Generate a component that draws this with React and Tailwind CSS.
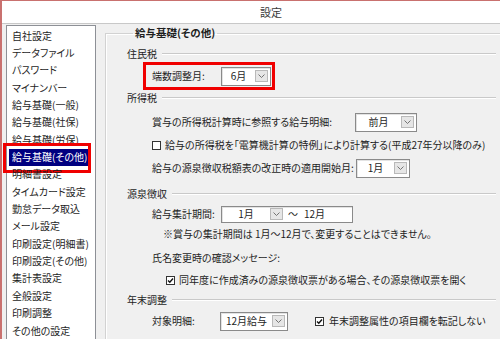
import React from "react";

const menu = [
  "自社設定",
  "データファイル",
  "パスワード",
  "マイナンバー",
  "給与基礎(一般)",
  "給与基礎(社保)",
  "給与基礎(労保)",
  "給与基礎(その他)",
  "明細書設定",
  "タイムカード設定",
  "勤怠データ取込",
  "メール設定",
  "印刷設定(明細書)",
  "印刷設定(その他)",
  "集計表設定",
  "全般設定",
  "印刷調整",
  "その他の設定",
];

const DropBtn = () => (
  <span className="flex h-[12px] w-[13px] shrink-0 items-center justify-center border border-[#b9b9b9] bg-[#e6e6e6]">
    <svg width="7" height="4" viewBox="0 0 7 4">
      <path d="M0.5 0.5 L3.5 3.5 L6.5 0.5" fill="none" stroke="#666" strokeWidth="0.9" />
    </svg>
  </span>
);

const Select = ({ value, w }) => (
  <div
    className="flex h-[19px] shrink-0 items-center border border-[#8a8a8a] bg-white pr-[2px] shadow-[inset_1px_1px_0_#e3e3e3]"
    style={{ width: w }}
  >
    <span className="flex-1 text-center">{value}</span>
    <DropBtn />
  </div>
);

const CheckBox = ({ checked }) => (
  <span className="flex h-[9px] w-[9px] shrink-0 items-center justify-center border border-[#333] bg-white">
    {checked && (
      <svg width="7" height="7" viewBox="0 0 7 7">
        <path d="M1 3.5 L2.8 5.3 L6 1.5" fill="none" stroke="#111" strokeWidth="1.4" />
      </svg>
    )}
  </span>
);

const Section = ({ title, h }) => (
  <div className="flex items-center gap-[5px]" style={{ height: h }}>
    <span>{title}</span>
    <span className="h-[2px] flex-1 border-t border-b border-t-[#c9c9c9] border-b-white" />
  </div>
);

export default function App() {
  return (
    <div
      className="h-[339px] w-[500px] overflow-hidden whitespace-nowrap border-l-2 border-t border-[#c9716f] bg-[#f0f0f0] text-[10px] leading-none text-[#1e1e1e] [font-feature-settings:'palt']"
      style={{ fontFamily: '"Noto Sans CJK JP", "Noto Sans", sans-serif' }}
    >
      <div className="flex h-[23px] items-center border-b border-[#c8c8c8] bg-white pl-[258px] text-[11px] text-[#3a3a3a]">
        設定
      </div>

      <div className="flex">
        {/* left list */}
        <div className="ml-[4px] mt-px h-[330px] w-[90px] shrink-0 border border-[#8d9096] bg-white pt-[1px]">
          {menu.map((m) => {
            const sel = m === "給与基礎(その他)";
            return (
              <div key={m} className="relative flex h-[17.35px] items-center pl-[2px]">
                {sel ? (
                  <>
                    <span className="flex h-[17px] items-center bg-[#000080] pl-[3px] pr-[2px] text-white">{m}</span>
                    <span className="absolute left-[-4px] top-[-5px] h-[30px] w-[88px] border-[3px] border-[#f00000]" />
                  </>
                ) : (
                  <span className="pl-[3px]">{m}</span>
                )}
              </div>
            );
          })}
        </div>

        {/* right group */}
        <fieldset className="ml-[9px] mt-[2px] h-[330px] w-[412px] shrink-0 border border-[#d2d2d2] pl-[21px] pr-[20px] shadow-[inset_1px_1px_0_#fff]">
          <legend className="ml-[6px] px-[2px] text-[10.5px] font-bold leading-[14px]">給与基礎(その他)</legend>

          <div className="mt-[5px] flex flex-col">
            <Section title="住民税" h={17} />

            <div className="ml-[16px] flex h-[28px] w-[132px] items-center border-[3px] border-[#f00000] pl-[6px] pr-[1px]">
              <span className="w-[69px]">端数調整月:</span>
              <Select value="6月" w={50} />
            </div>

            <Section title="所得税" h={16} />

            <div className="flex h-[32px] items-center pl-[25px]">
              <span className="w-[203px]">賞与の所得税計算時に参照する給与明細:</span>
              <Select value="前月" w={62} />
            </div>

            <div className="flex h-[14px] items-center gap-[4px] pl-[25px]">
              <CheckBox />
              <span>給与の所得税を「電算機計算の特例」により計算する(平成27年分以降のみ)</span>
            </div>

            <div className="flex h-[32px] items-center pl-[25px]">
              <span className="w-[204px]">給与の源泉徴収税額表の改正時の適用開始月:</span>
              <Select value="1月" w={54} />
            </div>

            <Section title="源泉徴収" h={20} />

            <div className="flex h-[20px] items-center pl-[25px]">
              <span className="w-[69px]">給与集計期間:</span>
              <div className="flex h-[17px] w-[132px] items-center border border-[#8a8a8a] bg-white shadow-[inset_1px_1px_0_#e3e3e3]">
                <span className="w-[48px] text-center">1月</span>
                <DropBtn />
                <span className="ml-[5px]">～</span>
                <span className="ml-[6px]">12月</span>
              </div>
            </div>

            <div className="flex h-[20px] items-center pl-[36px]">
              ※賞与の集計期間は 1月～12月で、変更することはできません。
            </div>

            <div className="flex h-[28px] items-center pl-[25px]">氏名変更時の確認メッセージ:</div>

            <div className="flex h-[16px] items-center gap-[4px] pl-[39px]">
              <CheckBox checked />
              <span>同年度に作成済みの源泉徴収票がある場合、その源泉徴収票を開く</span>
            </div>

            <Section title="年末調整" h={24} />

            <div className="flex h-[18px] items-center pl-[25px]">
              <span className="w-[68px]">対象明細:</span>
              <Select value="12月給与" w={68} />
              <span className="ml-[27px] flex items-center gap-[5px]">
                <CheckBox checked />
                <span>年末調整属性の項目欄を転記しない</span>
              </span>
            </div>
          </div>
        </fieldset>
      </div>
    </div>
  );
}
